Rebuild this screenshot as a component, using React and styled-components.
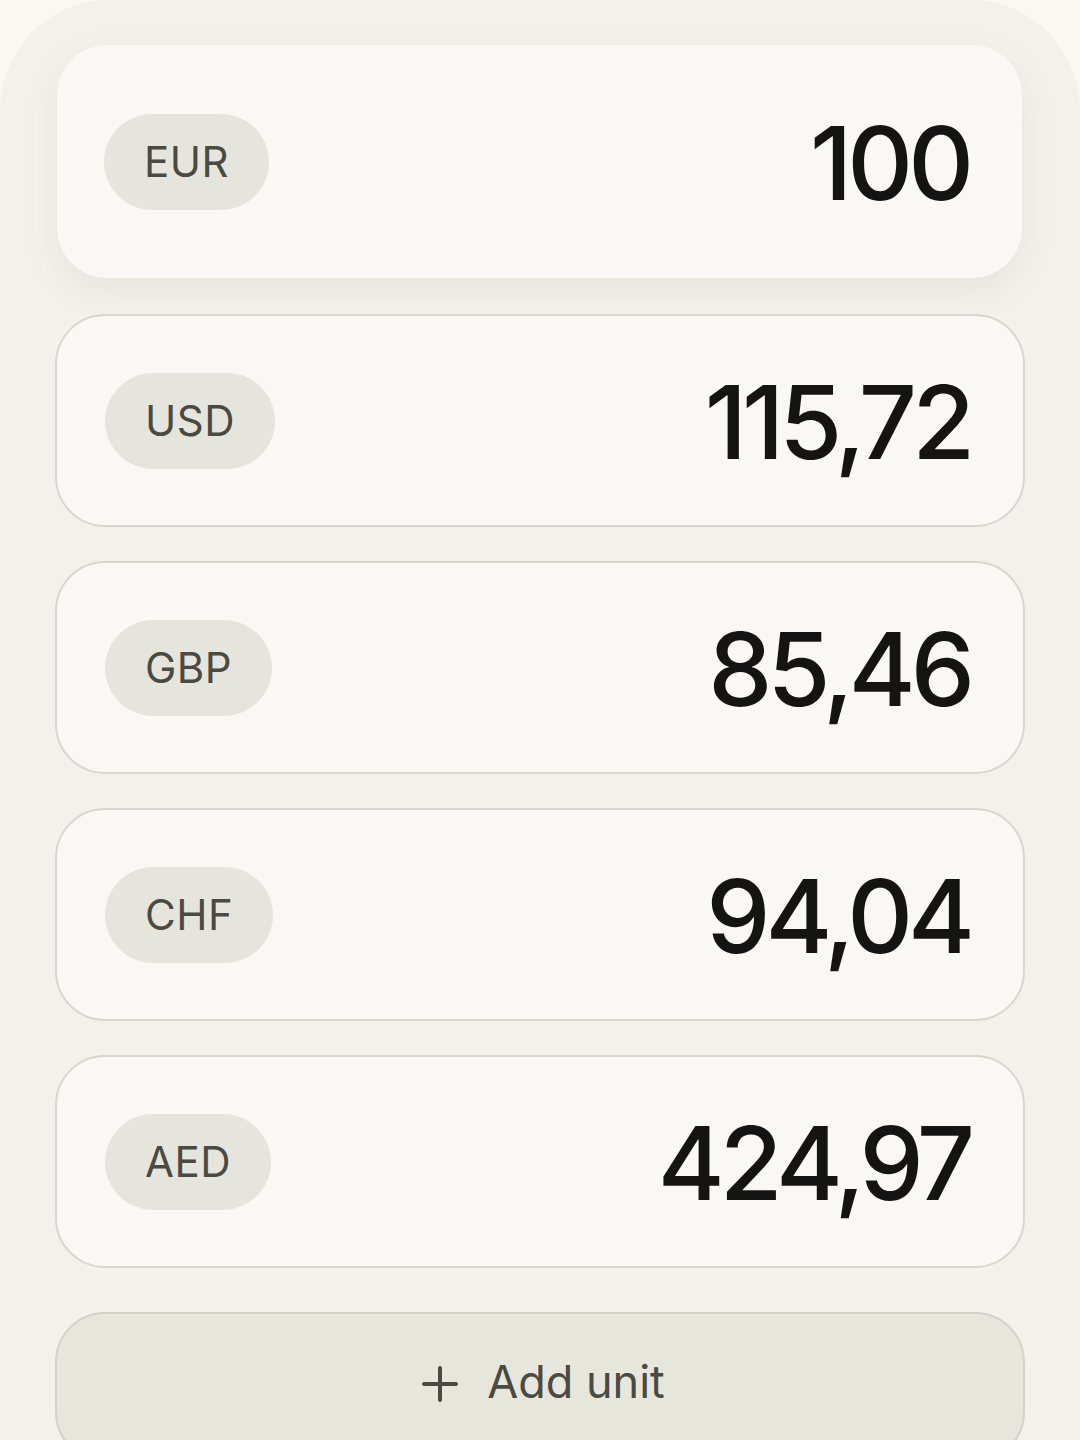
import React from "react";
import styled, { createGlobalStyle } from "styled-components";

const GlobalStyle = createGlobalStyle`
  html, body {
    margin: 0;
    padding: 0;
    background: #f9f8f3;
    font-family: Inter, "Noto Sans", sans-serif;
  }
`;

const Page = styled.div`
  width: 1080px;
  height: 1440px;
  overflow: hidden;
`;

const Panel = styled.div`
  background: #f2f1eb;
  border-radius: 110px 110px 0 0;
  padding: 45px 55px 60px;
  display: flex;
  flex-direction: column;
  gap: 34px;
  min-height: 1440px;
  box-sizing: border-box;
`;

const Card = styled.div`
  display: flex;
  align-items: center;
  justify-content: space-between;
  box-sizing: border-box;
  height: ${(p) => (p.active ? "233px" : "213px")};
  margin: ${(p) => (p.active ? "0 3px 2px 2px" : "0")};
  padding: 0 53px 0 ${(p) => (p.active ? "47px" : "48px")};
  background: #f9f8f4;
  border: ${(p) => (p.active ? "none" : "2px solid #d8d7cf")};
  border-radius: 50px;
  box-shadow: ${(p) =>
    p.active ? "0 12px 34px rgba(120, 115, 95, 0.10)" : "none"};
`;

const Chip = styled.div`
  height: 96px;
  padding: 0 40px;
  display: flex;
  align-items: center;
  border-radius: 48px;
  background: #e6e5dd;
  color: #4a4a43;
  font-size: 42px;
  font-weight: 400;
  letter-spacing: 0.5px;
`;

const Amount = styled.div`
  font-size: 102px;
  font-weight: 550;
  color: #141413;
  letter-spacing: -5px;
  line-height: 1;
  margin-top: 2px;
`;

const AddButton = styled.button`
  height: 150px;
  margin-top: 10px;
  box-sizing: border-box;
  display: flex;
  align-items: flex-start;
  justify-content: center;
  gap: 28px;
  padding-top: 40px;
  background: #e7e6dd;
  border: 2px solid #d3d2ca;
  border-radius: 50px;
  color: #4a4a43;
  font-family: Inter, "Noto Sans", sans-serif;
  font-size: 45px;
  font-weight: 400;
`;

const PlusIcon = () => (
  <svg width="38" height="38" viewBox="0 0 38 38" style={{ marginTop: 11, marginLeft: 6 }}>
    <path
      d="M19 3v32M3 19h32"
      stroke="#4a4a43"
      strokeWidth="4"
      strokeLinecap="round"
    />
  </svg>
);

const rows = [
  { code: "EUR", value: "100", active: true },
  { code: "USD", value: "115,72" },
  { code: "GBP", value: "85,46" },
  { code: "CHF", value: "94,04" },
  { code: "AED", value: "424,97" },
];

export default function App() {
  return (
    <Page>
      <GlobalStyle />
      <Panel>
        {rows.map((r) => (
          <Card key={r.code} active={r.active}>
            <Chip>{r.code}</Chip>
            <Amount>{r.value}</Amount>
          </Card>
        ))}
        <AddButton>
          <PlusIcon />
          Add unit
        </AddButton>
      </Panel>
    </Page>
  );
}
